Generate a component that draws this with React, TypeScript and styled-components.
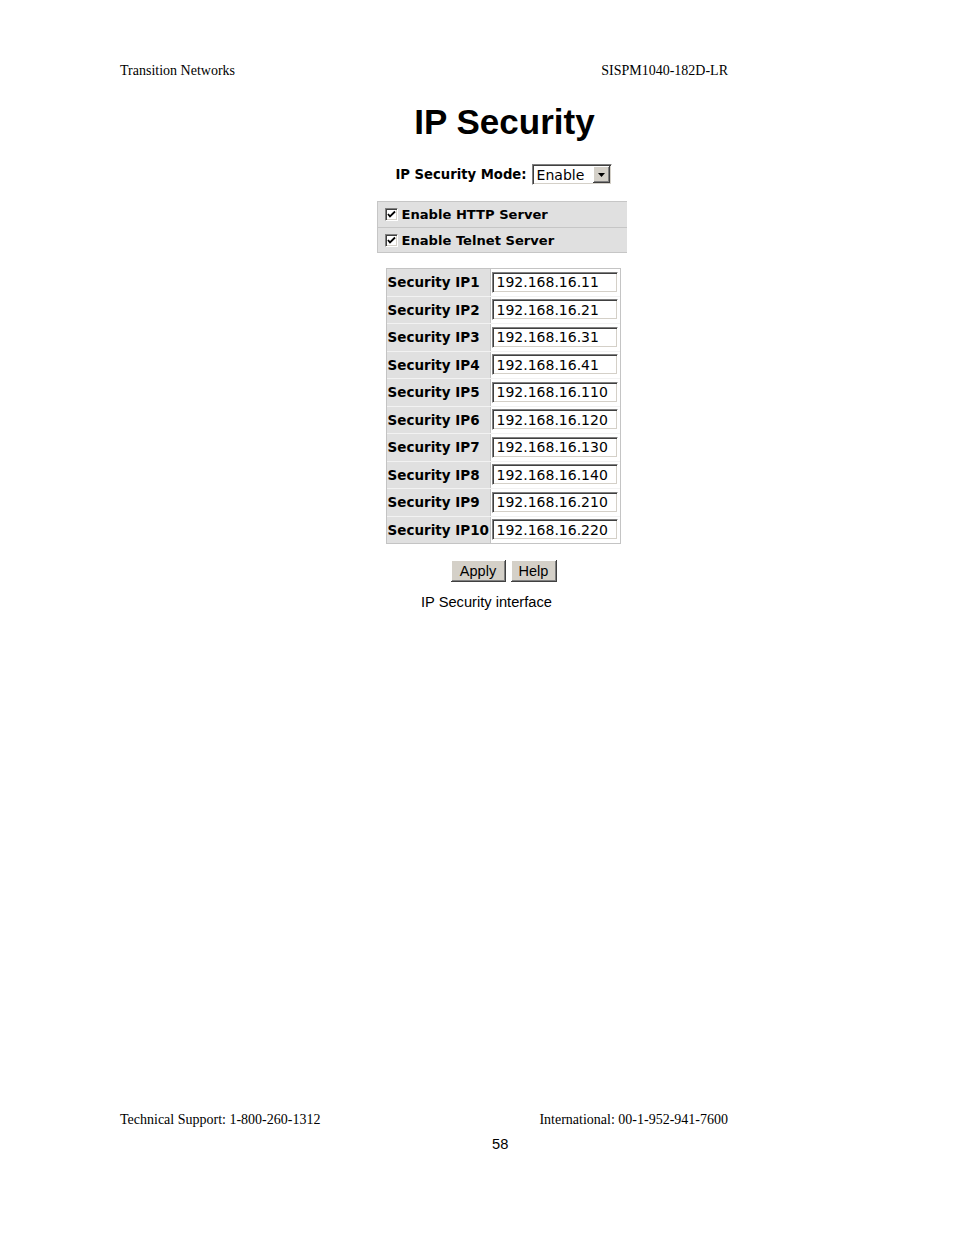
import React from "react";
import styled, { createGlobalStyle } from "styled-components";

const Global = createGlobalStyle`
  html, body { margin: 0; padding: 0; background: #ffffff; }
  body { font-family: "Liberation Serif", "Times New Roman", serif; color: #000; }
`;

const Page = styled.div`
  width: 954px;
  height: 1235px;
  display: flex;
  flex-direction: column;
  box-sizing: border-box;
  padding-top: 63px;
  padding-bottom: 82px;
  overflow: hidden;
`;

const DocLine = styled.div`
  display: flex;
  justify-content: space-between;
  padding: 0 226px 0 120px;
  font-family: "Liberation Serif", "Times New Roman", serif;
  font-size: 14px;
  line-height: 16px;
`;

const Screen = styled.div`
  margin-left: 378px;
  width: 250px;
  display: flex;
  flex-direction: column;
  align-items: center;
  margin-top: 23px;
`;

const Title = styled.h1`
  margin: 0;
  padding-left: 3px;
  font-family: "Liberation Sans", Arial, sans-serif;
  font-weight: bold;
  font-size: 35px;
  line-height: 40px;
  color: #000;
`;

const ModeRow = styled.div`
  margin-top: 22px;
  display: flex;
  align-items: center;
  gap: 5px;
  height: 21px;
  padding-left: 1px;
`;

const Label = styled.span<{ $size?: number }>`
  font-family: "DejaVu Sans", Verdana, sans-serif;
  font-weight: bold;
  font-size: ${(p) => p.$size ?? 13.5}px;
  color: #000;
  white-space: nowrap;
`;

const Select = styled.div`
  width: 80px;
  height: 21px;
  box-sizing: border-box;
  display: flex;
  align-items: center;
  justify-content: space-between;
  background: #fff;
  border-top: 1px solid #808080;
  border-left: 1px solid #808080;
  border-right: 1px solid #ffffff;
  border-bottom: 1px solid #ffffff;
  box-shadow: inset 1px 1px 0 #404040, inset -1px -1px 0 #d4d0c8;
  padding: 0 1px 0 4px;
`;

const SelectText = styled.span`
  font-family: "DejaVu Sans", Verdana, sans-serif;
  font-size: 14px;
  color: #000;
`;

const ArrowBtn = styled.span`
  width: 17px;
  height: 17px;
  box-sizing: border-box;
  background: #d4d0c8;
  box-shadow: inset -1px -1px 0 #404040, inset 1px 1px 0 #ffffff, inset -2px -2px 0 #808080;
  display: flex;
  align-items: center;
  justify-content: center;
`;

const Panel = styled.div`
  margin-top: 16px;
  width: 249px;
  margin-right: 3px;
  display: flex;
  flex-direction: column;
  background: #e0e0e0;
  border-top: 1px solid #c6c6c6;
  border-left: 1px solid #c6c6c6;
  border-bottom: 1px solid #c6c6c6;
`;

const CheckRow = styled.div<{ $first?: boolean }>`
  height: ${(p) => (p.$first ? 25 : 24)}px;
  display: flex;
  align-items: center;
  gap: 4px;
  padding-left: 7px;
  border-top: ${(p) => (p.$first ? "none" : "1px solid #c6c6c6")};
`;

const Box = styled.span`
  width: 13px;
  height: 13px;
  box-sizing: border-box;
  background: #fff;
  border-top: 1px solid #808080;
  border-left: 1px solid #808080;
  border-right: 1px solid #ffffff;
  border-bottom: 1px solid #ffffff;
  box-shadow: inset 1px 1px 0 #404040, inset -1px -1px 0 #d4d0c8;
  display: flex;
  align-items: center;
  justify-content: center;
`;

const Table = styled.div`
  margin-top: 15px;
  width: 235px;
  box-sizing: border-box;
  border: 1px solid #c4c4c4;
  display: flex;
  flex-direction: column;
`;

const Row = styled.div<{ $last?: boolean }>`
  display: grid;
  grid-template-columns: 104px 1fr;
  height: ${(p) => (p.$last ? 26.5 : 27.5)}px;
  box-sizing: border-box;
  border-bottom: ${(p) => (p.$last ? "none" : "1px solid #f2f2f2")};
`;

const LabelCell = styled.div`
  background: #e0e0e0;
  display: flex;
  align-items: center;
  padding-left: 1px;
  border-right: 1px solid #c4c4c4;
`;

const InputCell = styled.div`
  background: #fff;
  display: flex;
  align-items: center;
  padding-left: 1px;
`;

const IpInput = styled.div`
  width: 126px;
  height: 21px;
  box-sizing: border-box;
  background: #fff;
  border-top: 1px solid #808080;
  border-left: 1px solid #808080;
  border-right: 1px solid #ffffff;
  border-bottom: 1px solid #ffffff;
  box-shadow: inset 1px 1px 0 #404040, inset -1px -1px 0 #d4d0c8;
  display: flex;
  align-items: center;
  padding-left: 4px;
  font-family: "DejaVu Sans", Verdana, sans-serif;
  font-size: 14px;
  color: #000;
`;

const Buttons = styled.div`
  margin-top: 16px;
  display: flex;
  gap: 5px;
  padding-left: 1px;
`;

const Button = styled.button<{ $w: number }>`
  width: ${(p) => p.$w}px;
  height: 22px;
  padding: 0;
  background: #d4d0c8;
  border: none;
  box-shadow: inset -1px -1px 0 #404040, inset 1px 1px 0 #ffffff, inset -2px -2px 0 #808080;
  font-family: "Liberation Sans", Arial, sans-serif;
  font-size: 14.5px;
  color: #000;
`;

const Caption = styled.div`
  margin-top: 12px;
  margin-left: 421px;
  font-family: "Liberation Sans", Arial, sans-serif;
  font-size: 14.67px;
  line-height: 17px;
`;

const Footer = styled.div`
  margin-top: auto;
  display: flex;
  flex-direction: column;
`;

const PageNumber = styled.div`
  margin-top: 8px;
  margin-left: 492px;
  font-family: "Liberation Sans", Arial, sans-serif;
  font-size: 14.67px;
  line-height: 17px;
`;

const Check = () => (
  <svg width="9" height="9" viewBox="0 0 9 9">
    <polyline points="1,4 3,6.5 8,1.5" fill="none" stroke="#000" strokeWidth="1.8" />
  </svg>
);

const ips = [
  "192.168.16.11",
  "192.168.16.21",
  "192.168.16.31",
  "192.168.16.41",
  "192.168.16.110",
  "192.168.16.120",
  "192.168.16.130",
  "192.168.16.140",
  "192.168.16.210",
  "192.168.16.220",
];

export default function App() {
  return (
    <Page>
      <Global />
      <DocLine>
        <span>Transition Networks</span>
        <span>SISPM1040-182D-LR</span>
      </DocLine>
      <Screen>
        <Title>IP Security</Title>
        <ModeRow>
          <Label $size={13.2}>IP Security Mode:</Label>
          <Select>
            <SelectText>Enable</SelectText>
            <ArrowBtn>
              <svg width="7" height="4" viewBox="0 0 7 4">
                <polygon points="0,0 7,0 3.5,4" fill="#000" />
              </svg>
            </ArrowBtn>
          </Select>
        </ModeRow>
        <Panel>
          <CheckRow $first>
            <Box>
              <Check />
            </Box>
            <Label $size={13.1}>Enable HTTP Server</Label>
          </CheckRow>
          <CheckRow>
            <Box>
              <Check />
            </Box>
            <Label $size={13.1}>Enable Telnet Server</Label>
          </CheckRow>
        </Panel>
        <Table>
          {ips.map((ip, i) => (
            <Row key={i} $last={i === ips.length - 1}>
              <LabelCell>
                <Label>Security IP{i + 1}</Label>
              </LabelCell>
              <InputCell>
                <IpInput>{ip}</IpInput>
              </InputCell>
            </Row>
          ))}
        </Table>
        <Buttons>
          <Button $w={55}>Apply</Button>
          <Button $w={46}>Help</Button>
        </Buttons>
      </Screen>
      <Caption>IP Security interface</Caption>
      <Footer>
        <DocLine>
          <span>Technical Support: 1-800-260-1312</span>
          <span>International: 00-1-952-941-7600</span>
        </DocLine>
        <PageNumber>58</PageNumber>
      </Footer>
    </Page>
  );
}
